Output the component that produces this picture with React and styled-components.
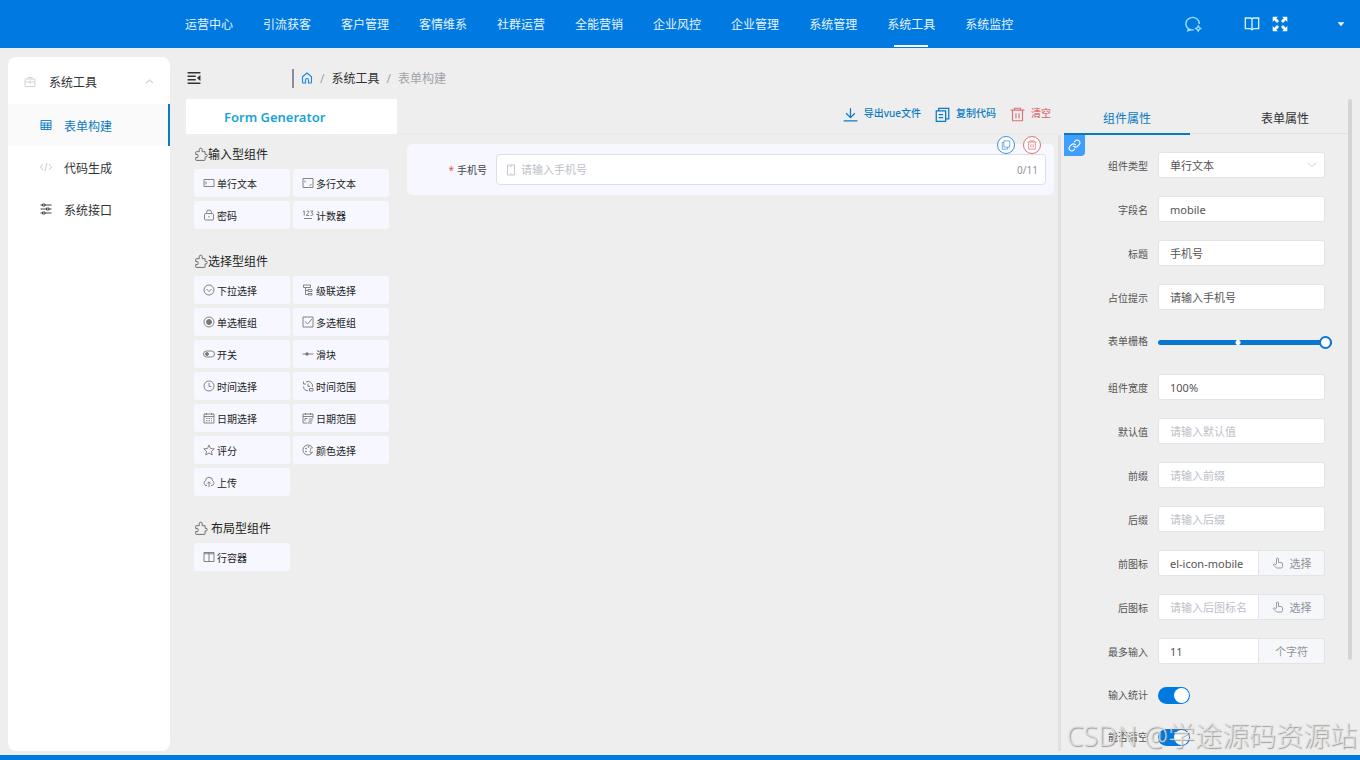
import React, { useState } from 'react';
import styled, { createGlobalStyle } from 'styled-components';
import { Link } from 'lucide-react';

const GlobalStyle = createGlobalStyle`
  :root {
    --primary: #0079e0;
    --active: #0b7bc1;
    --danger: #dd7379;
    --page: #eeeeee;
    --card: #f6f7ff;
    --muted: #909399;
    --placeholder: #bcc0c8;
  }
  * {
    box-sizing: border-box;
  }
  body {
    margin: 0;
    background-color: var(--page);
  }
  body, button, input, select {
    font-family: "Noto Sans", "Noto Sans CJK SC", sans-serif;
  }
`;

const Screen = styled.div`
  display: flex;
  flex-direction: column;
  height: 100vh;
  overflow: hidden;
  border-bottom: 5px solid var(--primary);
  position: relative;
`;

const Header = styled.header`
  display: flex;
  align-items: center;
  flex: none;
  height: 48px;
  padding: 0 15px 0 185px;
  background-color: var(--primary);
`;

const Nav = styled.nav`
  display: flex;
  flex: 1;
  gap: 30px;
  height: 100%;
`;

const NavLink = styled.a`
  height: 100%;
  font-size: 12px;
  line-height: 50px;
  white-space: nowrap;
  color: #e6f5ff;
  text-decoration: none;
  background: ${props => props.$active ? 'linear-gradient(#fff, #fff) center 45px / 34px 2px no-repeat' : 'none'};
`;

const HeaderTools = styled.div`
  display: flex;
  align-items: center;
`;

const IconButton = styled.button`
  display: flex;
  padding: 0;
  border: none;
  background: none;
  color: ${props => props.$color || '#fff'};
  margin-left: ${props => props.$space || 0}px;
  cursor: pointer;
`;

const Body = styled.div`
  display: flex;
  flex: 1;
  min-height: 0;
  padding: 9px 8px 4px;
`;

const Sidebar = styled.aside`
  flex: none;
  width: 162px;
  padding-top: 2px;
  border-radius: 8px;
  background-color: #fff;
`;

const SidebarTitle = styled.button`
  display: flex;
  align-items: center;
  width: 100%;
  height: 45px;
  padding: 0 16px;
  border: none;
  background: none;
  font-size: 12px;
  color: #303133;
  text-align: left;
  cursor: pointer;
  span {
    flex: 1;
    padding-left: 13px;
  }
  svg {
    color: #999;
  }
  svg:first-child {
    color: #c8c8c8;
  }
`;

const SidebarLink = styled.a`
  display: flex;
  align-items: center;
  gap: 12px;
  height: 42px;
  padding: 2px 0 0 32px;
  font-size: 12px;
  text-decoration: none;
  color: ${props => props.$active ? 'var(--active)' : '#303133'};
  background-color: ${props => props.$active ? '#fafafa' : 'transparent'};
  border-right: 2px solid ${props => props.$active ? 'var(--active)' : 'transparent'};
  svg {
    margin-bottom: 2px;
    color: ${props => props.$faded ? '#c0c4cc' : 'inherit'};
  }
`;

const Main = styled.main`
  display: flex;
  flex-direction: column;
  flex: 1;
  min-width: 0;
  padding-left: 16px;
`;

const TopBar = styled.div`
  display: flex;
  align-items: center;
  flex: none;
  height: 42px;
`;

const Breadcrumb = styled.nav`
  display: flex;
  align-items: center;
  gap: 7px;
  height: 19px;
  margin-left: 91px;
  padding-left: 7px;
  border-left: 2px solid #8a8f98;
  font-size: 12px;
  color: #a0a3a8;
  a {
    display: flex;
    color: #303133;
    text-decoration: none;
  }
  a:first-child {
    color: #1a86dc;
  }
`;

const Workspace = styled.div`
  display: flex;
  flex: 1;
  min-height: 0;
`;

const Palette = styled.section`
  flex: none;
  width: 211px;
`;

const PaletteHeader = styled.h1`
  height: 35px;
  margin: 0;
  padding-left: 38px;
  background-color: #fff;
  font-size: 13px;
  font-weight: 600;
  line-height: 36px;
  color: #1aa3d8;
`;

const Group = styled.div`
  padding: 10px 8px 12px;
`;

const GroupTitle = styled.h2`
  display: flex;
  align-items: center;
  height: 20px;
  margin: 0 0 5px;
  font-size: 12px;
  font-weight: normal;
  white-space: pre;
  color: #222;
  svg {
    color: #666;
  }
`;

const Cards = styled.div`
  display: grid;
  grid-template-columns: 1fr 1fr;
  gap: 4px 3px;
`;

const Card = styled.button`
  display: flex;
  align-items: center;
  gap: 2px;
  height: 28px;
  padding: 0 9px;
  border: none;
  border-radius: 3px;
  background-color: var(--card);
  font-size: 10px;
  color: #222;
  cursor: move;
  svg {
    color: #777;
  }
`;

const Board = styled.section`
  flex: 1;
  min-width: 0;
`;

const ActionBar = styled.div`
  display: flex;
  align-items: center;
  justify-content: flex-end;
  gap: 14px;
  height: 35px;
  padding: 0 7px 8px 0;
  border-bottom: 1px solid #e9e9e9;
`;

const Action = styled.button`
  display: flex;
  align-items: center;
  gap: 6px;
  padding: 0;
  border: none;
  background: none;
  font-size: 10px;
  font-weight: 500;
  color: ${props => props.$danger ? 'var(--danger)' : 'var(--active)'};
  cursor: pointer;
  svg {
    margin-top: 4px;
  }
`;

const Canvas = styled.div`
  padding: 10px 4px 0 10px;
`;

const CanvasItem = styled.div`
  position: relative;
  display: flex;
  align-items: center;
  gap: 9px;
  padding: 10px 8px;
  border-radius: 5px;
  background-color: var(--card);
`;

const CanvasLabel = styled.label`
  flex: none;
  width: 72px;
  font-size: 10px;
  text-align: right;
  color: #444;
  i {
    margin-right: 3px;
    font-style: normal;
    color: #e05555;
  }
`;

const CanvasField = styled.div`
  display: flex;
  align-items: center;
  flex: 1;
  gap: 4px;
  height: 31px;
  padding: 0 7px 0 8px;
  border: 1px solid #dcdfe6;
  border-radius: 4px;
  background-color: #fff;
  font-size: 10px;
  color: var(--muted);
  svg {
    color: #b5b9c0;
  }
  input {
    flex: 1;
    min-width: 0;
    padding: 0;
    border: none;
    outline: none;
    background: none;
    font-size: 11px;
  }
  input::placeholder {
    color: var(--placeholder);
  }
`;

const ItemTools = styled.div`
  position: absolute;
  top: -8px;
  right: 13px;
  display: flex;
  gap: 8px;
`;

const RoundButton = styled.button`
  display: flex;
  align-items: center;
  justify-content: center;
  width: 18px;
  height: 18px;
  padding: 0;
  border: 1px solid;
  border-radius: 50%;
  background-color: #fff;
  color: ${props => props.$danger ? 'var(--danger)' : '#3f93d6'};
  cursor: pointer;
`;

const Divider = styled.div`
  flex: none;
  width: 3px;
  margin: 36px 3px 0 0;
  background-color: #e0e0e0;
`;

const Panel = styled.section`
  position: relative;
  flex: none;
  width: 284px;
  overflow: hidden;
`;

const ScrollTrack = styled.div`
  flex: none;
  width: 4px;
  &::before {
    content: "";
    display: block;
    height: 86%;
    border-radius: 2px;
    background-color: #d4d4d4;
  }
`;

const Tabs = styled.div`
  display: flex;
  justify-content: space-between;
  height: 35px;
  border-bottom: 1px solid #dfe1e5;
`;

const Tab = styled.button`
  width: 126px;
  height: 36px;
  padding: 4px 0 0;
  border: none;
  border-bottom: 2px solid ${props => props.$active ? 'var(--active)' : 'transparent'};
  background: none;
  font-size: 12px;
  color: ${props => props.$active ? 'var(--active)' : '#303133'};
  cursor: pointer;
`;

const DocLink = styled.a`
  position: absolute;
  top: 36px;
  left: 0;
  display: flex;
  align-items: center;
  justify-content: center;
  width: 21px;
  height: 21px;
  border-bottom-right-radius: 4px;
  background-color: #409eff;
  color: #fff;
`;

const Form = styled.form`
  display: flex;
  flex-direction: column;
  gap: 18px;
  padding: 18px 23px 0 0;
`;

const Row = styled.div`
  display: flex;
  align-items: center;
  flex: none;
  gap: 10px;
  height: ${props => props.$slim ? 24 : 26}px;
  margin-bottom: ${props => props.$tall ? 4 : 0}px;
  > label {
    flex: none;
    width: 84px;
    font-size: 10px;
    text-align: right;
    color: #555;
  }
`;

const Control = styled.div`
  display: flex;
  align-items: center;
  flex: 1;
  min-width: 0;
  height: 100%;
  position: relative;
`;

const TextInput = styled.input`
  flex: 1;
  min-width: 0;
  height: 100%;
  padding: 0 11px;
  border: 1px solid #e2e4e8;
  border-radius: ${props => props.$joined ? '3px 0 0 3px' : '3px'};
  outline: none;
  background-color: #fff;
  font-size: 11px;
  color: #555;
  &::placeholder {
    color: var(--placeholder);
  }
`;

const Select = styled.select`
  appearance: none;
  flex: 1;
  height: 100%;
  padding: 0 11px;
  border: 1px solid #e2e4e8;
  border-radius: 3px;
  outline: none;
  background-color: #fff;
  font-size: 11px;
  color: #555;
`;

const SelectArrow = styled.span`
  position: absolute;
  right: 8px;
  display: flex;
  color: #c0c4cc;
  pointer-events: none;
`;

const Append = styled.button`
  display: flex;
  align-items: center;
  justify-content: center;
  gap: 6px;
  width: 66px;
  height: 100%;
  padding: 0;
  border: 1px solid #e2e4e8;
  border-left: none;
  border-radius: 0 3px 3px 0;
  background-color: #f5f7fa;
  font-size: 11px;
  color: var(--muted);
`;

const Range = styled.input`
  appearance: none;
  flex: none;
  width: calc(100% + 7px);
  height: 14px;
  margin: 4px 0 0;
  background: none;
  &::-webkit-slider-runnable-track {
    height: 5px;
    border-radius: 3px;
    background: radial-gradient(circle at 46% 50%, #fff 2px, transparent 3px), #0b76d2;
  }
  &::-webkit-slider-thumb {
    appearance: none;
    width: 13px;
    height: 13px;
    margin-top: -4px;
    border: 2px solid #0b76d2;
    border-radius: 50%;
    background-color: #fff;
  }
`;

const Switch = styled.input`
  appearance: none;
  width: 32px;
  height: 17px;
  margin: 3px 0 0;
  padding: 1px;
  border-radius: 9px;
  background-color: ${props => props.checked ? 'var(--primary)' : '#dcdfe6'};
  cursor: pointer;
  &::before {
    content: "";
    display: block;
    width: 15px;
    height: 15px;
    margin-left: ${props => props.checked ? 'auto' : 0};
    border-radius: 50%;
    background-color: #fff;
  }
`;

const Watermark = styled.div`
  position: absolute;
  right: 3px;
  bottom: 1px;
  font-size: 27px;
  font-weight: 300;
  line-height: 36px;
  white-space: nowrap;
  color: rgba(228, 228, 228, 0.8);
  text-shadow: 1px 1px 1px rgba(120, 120, 120, 0.7);
  pointer-events: none;
`;

const shapes = {
  chat: <><path d="M6 18.5A9 8.5 0 1 1 20.5 12M6 18.5 5 21l5-1.200M6 18.500c1 .8 2.500 1.300 4 1.300h3" /><path d="M19 14.500l1.300 2.200 2.200 1.300-2.200 1.300-1.300 2.200-1.300-2.200-2.200-1.300 2.200-1.300z" /></>,
  book: <path d="M12 4v17M12 4c-1-1-2-1-3-1H2v16h7c1 0 2 1 3 2M12 4c1-1 2-1 3-1h7v16h-7c-1 0-2 1-3 2" />,
  fullscreen: <g fill="currentColor" stroke="none"><path d="M1 1h8L6.500 3.500l4 4-3 3-4-4L1 9zM23 1h-8l2.500 2.500-4 4 3 3 4-4L23 9zM1 23h8l-2.500-2.500 4-4-3-3-4 4L1 15zM23 23h-8l2.500-2.500-4-4 3-3 4 4L23 15z" /></g>,
  caret: <path d="M2 7h20L12 19z" fill="currentColor" stroke="none" />,
  briefcase: <><rect x="2" y="6" width="20" height="15" rx="1" /><path d="M8 6V3h8v3M2 12h7M15 12h7M12 9v6M9 12h6" /></>,
  up: <path d="M3 16l9-8 9 8" />,
  down: <path d="M2 7l10 9 10-9" />,
  table: <path d="M2 3h20v18H2zM2 8h20M2 12.500h20M2 17h20M8.500 8v13M15.500 8v13" />,
  code: <path d="M6 6l-5 6 5 6M18 6l5 6-5 6M14 4l-4 16" />,
  sliders: <path d="M1 4h4M10 4h13M5 2h5v4H5zM1 12h12M18 12h5M13 10h5v4h-5zM1 20h4M10 20h13M5 18h5v4H5z" />,
  fold: <><path d="M1 3h22M1 9h14M1 15h14M1 21h22" /><path d="M23 7v10l-6-5z" fill="currentColor" stroke="none" /></>,
  home: <path d="M3 9.500 12 2l9 7.500V20a2 2 0 0 1-2 2h-4v-6a3 3 0 0 0-6 0v6H5a2 2 0 0 1-2-2z" />,
  puzzle: <path d="M4 8h5V4.500a2.500 2.500 0 0 1 5 0V8h5v4.500h1.500a2 2 0 0 1 0 4.500H19v5a1 1 0 0 1-1 1H4a1 1 0 0 1-1-1v-4h3a1 1 0 0 0 1-1v-3a1 1 0 0 0-1-1H3V9a1 1 0 0 1 1-1z" />,
  input: <path d="M2 5h20v14H2zM6 9v6" />,
  textarea: <path d="M2 3h20v18H2zM6 7v4M19 14l-4 4" />,
  lock: <><rect x="3" y="9" width="18" height="13" rx="2" /><path d="M7 9V7a5 5 0 0 1 10 0v2M12 14v3" /></>,
  number: <path d="M2 5l2.500-1v9M9 5c1-1.500 5-1.500 5 1 0 2-5 4-5 7h5M17 4h5l-3 4c4 0 4 5 0 5h-2M4 19h16" />,
  select: <><circle cx="12" cy="12" r="10" /><path d="M7 10l5 5 5-5" /></>,
  cascader: <path d="M3 2h14v5H3zM7 7v14h5M7 13h5M12 11h8v4h-8zM12 19h8v3h-8z" />,
  radio: <><circle cx="12" cy="12" r="10" /><circle cx="12" cy="12" r="5" fill="currentColor" /></>,
  checkbox: <path d="M2 2h20v20H2zM6 11l5 5 9-10" />,
  toggle: <><rect x="1" y="6" width="22" height="12" rx="6" /><circle cx="8" cy="12" r="3" fill="currentColor" /></>,
  slider: <><path d="M1 12h22" /><circle cx="10" cy="12" r="2.500" fill="currentColor" /></>,
  clock: <><circle cx="12" cy="12" r="10" /><path d="M12 6v7h5" /></>,
  timeRange: <path d="M3 3v5h5M8 3.500A9.500 9.500 0 0 1 21 14M12 7v6h4M3 13a9 9 0 0 0 9 8.500M15 17h7v5h-7z" />,
  date: <path d="M2 4h20v18H2zM2 9h20M7 2v4M17 2v4M6 13h3M11 13h3M16 13h2M6 17.500h3M11 17.500h3M16 17.500h2" />,
  dateRange: <path d="M22 12V4H2v18h9M2 9h20M7 2v4M17 2v4M6 18v-5h5M14 14h8M13 18h8M12 22h8" />,
  star: <path d="M12 2l3 7 7.500.700-5.700 5 1.700 7.300L12 18l-6.500 4 1.700-7.300-5.700-5L9 9z" />,
  color: <><path d="M21 8A10 10 0 1 0 21 16c-1 1-4 2-5 0s2-3 1-5 2-3 4-3z" /><circle cx="8" cy="9" r="1" /><circle cx="8" cy="15" r="1" /><circle cx="13" cy="6" r="1" /></>,
  upload: <path d="M8 19H6a5 5 0 0 1-1-9.500 7 7 0 0 1 14 0A5 5 0 0 1 18 19h-2M12 22v-10M8.500 15l3.500-3.500 3.500 3.500" />,
  columns: <path d="M2 3h20v18H2zM12 3v18M2 5.500h20" />,
  download: <path d="M12 2v14M5 10l7 7 7-7M1 22h22" />,
  copy: <path d="M2 6h15v17H2zM6 6V2h16v17h-5M6 12h7M6 17h7" />,
  duplicate: <path d="M7 2h14v15H7zM7 6H3v16h13v-5" />,
  trash: <path d="M1 5h22M7 5V2h10v3M4 5v17h16V5M9.500 10v8M14.500 10v8" />,
  phone: <path d="M5 2h14v20H5zM10 4.500h4M11 19h2" />,
  pointer: <path d="M9 14V4a2 2 0 0 1 4 0v7h5a3 3 0 0 1 3 3v5a3 3 0 0 1-3 3H9l-6-6c-1-2 1-3 2.500-2L9 16" />,
};

function Icon({ name, size = 12, weight = 1.8 }) {
  return (
    <svg width={size} height={size} viewBox="0 0 24 24" fill="none" stroke="currentColor" strokeWidth={weight} aria-hidden="true">
      {shapes[name]}
    </svg>
  );
}

const navItems = ['运营中心', '引流获客', '客户管理', '客情维系', '社群运营', '全能营销', '企业风控', '企业管理', '系统管理', '系统工具', '系统监控'];

const groups = [
  {
    title: '输入型组件',
    items: [['input', '单行文本'], ['textarea', '多行文本'], ['lock', '密码'], ['number', '计数器']],
  },
  {
    title: '选择型组件',
    items: [
      ['select', '下拉选择'], ['cascader', '级联选择'],
      ['radio', '单选框组'], ['checkbox', '多选框组'],
      ['toggle', '开关'], ['slider', '滑块'],
      ['clock', '时间选择'], ['timeRange', '时间范围'],
      ['date', '日期选择'], ['dateRange', '日期范围'],
      ['star', '评分'], ['color', '颜色选择'],
      ['upload', '上传'],
    ],
  },
  {
    title: ' 布局型组件',
    items: [['columns', '行容器']],
  },
];

function Field({ id, label, value, placeholder, append, pick }) {
  return (
    <Row>
      <label htmlFor={id}>{label}</label>
      <Control>
        <TextInput id={id} defaultValue={value} placeholder={placeholder} $joined={!!append} />
        {append && <Append type="button">{pick && <Icon name="pointer" />}{append}</Append>}
      </Control>
    </Row>
  );
}

function App() {
  const [tab, setTab] = useState('field');
  const [showCount, setShowCount] = useState(true);
  const [clearable, setClearable] = useState(true);

  return (
    <Screen>
      <GlobalStyle />
      <Header>
        <Nav>
          {navItems.map(item => (
            <NavLink key={item} href="#" $active={item === '系统工具'}>{item}</NavLink>
          ))}
        </Nav>
        <HeaderTools>
          <IconButton aria-label="chat" $color="#9fdcff"><Icon name="chat" size={18} /></IconButton>
          <IconButton aria-label="docs" $space={42} $color="#d5f3ff"><Icon name="book" size={16} weight={2} /></IconButton>
          <IconButton aria-label="fullscreen" $space={12}><Icon name="fullscreen" size={16} /></IconButton>
          <IconButton aria-label="account" $space={49}><Icon name="caret" size={8} /></IconButton>
        </HeaderTools>
      </Header>
      <Body>
        <Sidebar>
          <SidebarTitle>
            <Icon name="briefcase" weight={1.600} />
            <span>系统工具</span>
            <Icon name="up" size={9} />
          </SidebarTitle>
          <SidebarLink href="#" $active><Icon name="table" />表单构建</SidebarLink>
          <SidebarLink href="#" $faded><Icon name="code" />代码生成</SidebarLink>
          <SidebarLink href="#"><Icon name="sliders" />系统接口</SidebarLink>
        </Sidebar>
        <Main>
          <TopBar>
            <IconButton aria-label="collapse" $color="#333" $space={1}><Icon name="fold" size={14} weight={2.200} /></IconButton>
            <Breadcrumb>
              <a href="#" aria-label="home"><Icon name="home" weight={2.200} /></a>
              <span>/</span>
              <a href="#">系统工具</a>
              <span>/</span>
              <span>表单构建</span>
            </Breadcrumb>
          </TopBar>
          <Workspace>
            <Palette>
              <PaletteHeader>Form Generator</PaletteHeader>
              {groups.map(group => (
                <Group key={group.title}>
                  <GroupTitle><Icon name="puzzle" size={14} weight={1.600} />{group.title}</GroupTitle>
                  <Cards>
                    {group.items.map(([icon, text]) => (
                      <Card key={text}><Icon name={icon} />{text}</Card>
                    ))}
                  </Cards>
                </Group>
              ))}
            </Palette>
            <Board>
              <ActionBar>
                <Action><Icon name="download" size={15} weight={2} />导出vue文件</Action>
                <Action><Icon name="copy" size={15} weight={2} />复制代码</Action>
                <Action $danger><Icon name="trash" size={15} />清空</Action>
              </ActionBar>
              <Canvas>
                <CanvasItem>
                  <CanvasLabel htmlFor="mobile"><i>*</i>手机号</CanvasLabel>
                  <CanvasField>
                    <Icon name="phone" weight={1.600} />
                    <input id="mobile" placeholder="请输入手机号" />
                    <span>0/11</span>
                  </CanvasField>
                  <ItemTools>
                    <RoundButton aria-label="copy"><Icon name="duplicate" size={10} /></RoundButton>
                    <RoundButton aria-label="delete" $danger><Icon name="trash" size={10} /></RoundButton>
                  </ItemTools>
                </CanvasItem>
              </Canvas>
            </Board>
            <Divider />
            <Panel>
              <Tabs>
                <Tab $active={tab === 'field'} onClick={() => setTab('field')}>组件属性</Tab>
                <Tab $active={tab === 'form'} onClick={() => setTab('form')}>表单属性</Tab>
              </Tabs>
              <DocLink href="#" aria-label="link"><Link size={13} strokeWidth={2} /></DocLink>
              <Form>
                <Row>
                  <label htmlFor="type">组件类型</label>
                  <Control>
                    <Select id="type"><option>单行文本</option></Select>
                    <SelectArrow><Icon name="down" size={10} /></SelectArrow>
                  </Control>
                </Row>
                <Field id="name" label="字段名" value="mobile" />
                <Field id="title" label="标题" value="手机号" />
                <Field id="hint" label="占位提示" value="请输入手机号" />
                <Row $slim $tall>
                  <label htmlFor="span">表单栅格</label>
                  <Control>
                    <Range id="span" type="range" min="1" max="24" defaultValue="24" />
                  </Control>
                </Row>
                <Field id="width" label="组件宽度" value="100%" />
                <Field id="default" label="默认值" placeholder="请输入默认值" />
                <Field id="prefix" label="前缀" placeholder="请输入前缀" />
                <Field id="suffix" label="后缀" placeholder="请输入后缀" />
                <Field id="prefixIcon" label="前图标" value="el-icon-mobile" append="选择" pick />
                <Field id="suffixIcon" label="后图标" placeholder="请输入后图标名称" append="选择" pick />
                <Field id="max" label="最多输入" value="11" append="个字符" />
                <Row $slim>
                  <label htmlFor="count">输入统计</label>
                  <Control>
                    <Switch id="count" type="checkbox" checked={showCount} onChange={e => setShowCount(e.target.checked)} />
                  </Control>
                </Row>
                <Row $slim>
                  <label htmlFor="clear">能否清空</label>
                  <Control>
                    <Switch id="clear" type="checkbox" checked={clearable} onChange={e => setClearable(e.target.checked)} />
                  </Control>
                </Row>
              </Form>
            </Panel>
            <ScrollTrack />
          </Workspace>
        </Main>
      </Body>
      <Watermark>CSDN @学途源码资源站</Watermark>
    </Screen>
  );
}

export default App;
